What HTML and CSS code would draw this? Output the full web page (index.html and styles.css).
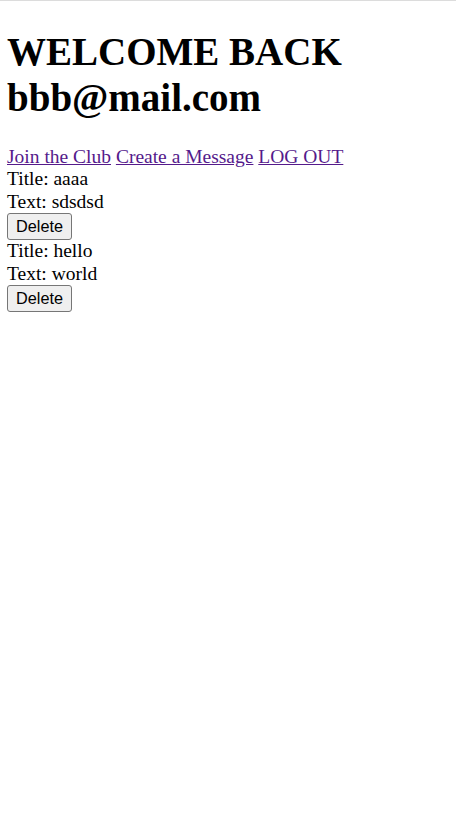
FILE: index.html
```html
<!DOCTYPE html>
<html>
<head>
<meta charset="utf-8">
<link rel="stylesheet" href="styles.css">
</head>
<body>
<div class="rule"></div>
<div class="page">
  <h1>WELCOME BACK bbb@mail.com</h1>
  <nav class="nav">
    <a href="#">Join the Club</a>
    <a href="#">Create a Message</a>
    <a href="#">LOG OUT</a>
  </nav>
  <div class="msg">
    <div class="line">Title: aaaa</div>
    <div class="line">Text: sdsdsd</div>
    <div class="line"><button class="btn">Delete</button></div>
  </div>
  <div class="msg">
    <div class="line">Title: hello</div>
    <div class="line">Text: world</div>
    <div class="line"><button class="btn">Delete</button></div>
  </div>
</div>
</body>
</html>
```
FILE: styles.css
```css
html, body {
  margin: 0;
  background: #fff;
}
body {
  font-family: "Liberation Serif", "Times New Roman", serif;
  font-size: 19.5px;
  color: #000;
}
.rule {
  border-top: 1px solid #dcdcdc;
}
.page {
  padding: 0 7px;
}
h1 {
  font-size: 39px;
  font-weight: bold;
  line-height: 46px;
  margin: 28px 0 25px;
}
.nav {
  line-height: 22.4px;
}
.nav a {
  color: #551a8b;
  text-decoration: underline;
}
.line {
  line-height: 22.4px;
}
.btn {
  display: inline-block;
  vertical-align: baseline;
  font-family: "Liberation Sans", Arial, sans-serif;
  font-size: 16.25px;
  line-height: normal;
  padding: 3px 8px;
  margin: 0;
  border: 1px solid #767676;
  border-radius: 3px;
  background: #efefef;
  color: #000;
}
```
